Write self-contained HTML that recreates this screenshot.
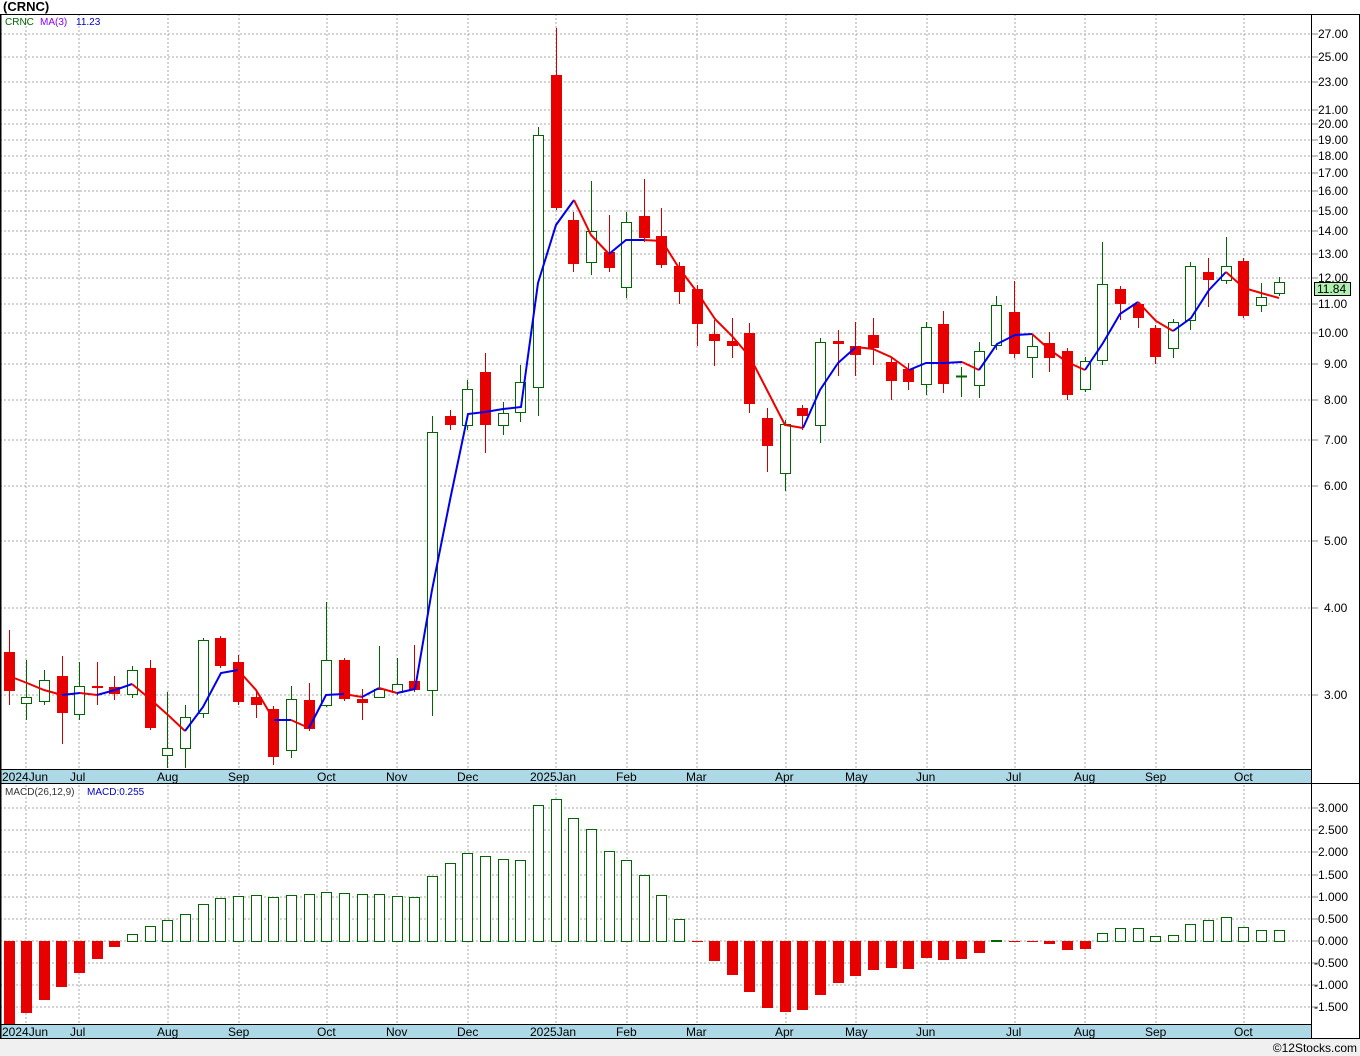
<!DOCTYPE html>
<html><head><meta charset="utf-8"><style>
body{margin:0;background:#fff;width:1360px;height:1056px;overflow:hidden}
svg{display:block;font-family:"Liberation Sans",sans-serif}
.g{stroke:#aaa;stroke-dasharray:2 2;stroke-width:1}
.r line{stroke:#c00;stroke-width:1}.r rect{fill:#e60000}
.w line{stroke:#060;stroke-width:1}.w rect{fill:#fff;stroke:#060;stroke-width:1}
.ax{font-size:12px;fill:#000}
.pl{font-size:12px;fill:#000}
.hp rect{fill:#fff;stroke:#060}
.hn rect{fill:#e60000}
</style></head><body>
<svg width="1360" height="1056" viewBox="0 0 1360 1056">
<text x="3" y="11" font-size="13" font-weight="bold">(CRNC)</text>
<!-- main grid -->
<g class="g">
<line x1="0" x2="1311" y1="34" y2="34"/><line x1="0" x2="1311" y1="57" y2="57"/><line x1="0" x2="1311" y1="82" y2="82"/><line x1="0" x2="1311" y1="110" y2="110"/><line x1="0" x2="1311" y1="124" y2="124"/><line x1="0" x2="1311" y1="140" y2="140"/><line x1="0" x2="1311" y1="156" y2="156"/><line x1="0" x2="1311" y1="173" y2="173"/><line x1="0" x2="1311" y1="191" y2="191"/><line x1="0" x2="1311" y1="211" y2="211"/><line x1="0" x2="1311" y1="231" y2="231"/><line x1="0" x2="1311" y1="254" y2="254"/><line x1="0" x2="1311" y1="278" y2="278"/><line x1="0" x2="1311" y1="304" y2="304"/><line x1="0" x2="1311" y1="333" y2="333"/><line x1="0" x2="1311" y1="364" y2="364"/><line x1="0" x2="1311" y1="400" y2="400"/><line x1="0" x2="1311" y1="440" y2="440"/><line x1="0" x2="1311" y1="486" y2="486"/><line x1="0" x2="1311" y1="541" y2="541"/><line x1="0" x2="1311" y1="608" y2="608"/><line x1="0" x2="1311" y1="695" y2="695"/>
<line x1="26" x2="26" y1="14" y2="770"/><line x1="79" x2="79" y1="14" y2="770"/><line x1="168" x2="168" y1="14" y2="770"/><line x1="239" x2="239" y1="14" y2="770"/><line x1="327" x2="327" y1="14" y2="770"/><line x1="397" x2="397" y1="14" y2="770"/><line x1="468" x2="468" y1="14" y2="770"/><line x1="556" x2="556" y1="14" y2="770"/><line x1="627" x2="627" y1="14" y2="770"/><line x1="697" x2="697" y1="14" y2="770"/><line x1="786" x2="786" y1="14" y2="770"/><line x1="856" x2="856" y1="14" y2="770"/><line x1="927" x2="927" y1="14" y2="770"/><line x1="1015" x2="1015" y1="14" y2="770"/><line x1="1085" x2="1085" y1="14" y2="770"/><line x1="1156" x2="1156" y1="14" y2="770"/><line x1="1244" x2="1244" y1="14" y2="770"/>
<!-- macd grid -->
<line x1="0" x2="1311" y1="808" y2="808"/><line x1="0" x2="1311" y1="830" y2="830"/><line x1="0" x2="1311" y1="852" y2="852"/><line x1="0" x2="1311" y1="875" y2="875"/><line x1="0" x2="1311" y1="897" y2="897"/><line x1="0" x2="1311" y1="919" y2="919"/><line x1="0" x2="1311" y1="941" y2="941"/><line x1="0" x2="1311" y1="963" y2="963"/><line x1="0" x2="1311" y1="985" y2="985"/><line x1="0" x2="1311" y1="1007" y2="1007"/>
<line x1="26" x2="26" y1="785" y2="1025"/><line x1="79" x2="79" y1="785" y2="1025"/><line x1="168" x2="168" y1="785" y2="1025"/><line x1="239" x2="239" y1="785" y2="1025"/><line x1="327" x2="327" y1="785" y2="1025"/><line x1="397" x2="397" y1="785" y2="1025"/><line x1="468" x2="468" y1="785" y2="1025"/><line x1="556" x2="556" y1="785" y2="1025"/><line x1="627" x2="627" y1="785" y2="1025"/><line x1="697" x2="697" y1="785" y2="1025"/><line x1="786" x2="786" y1="785" y2="1025"/><line x1="856" x2="856" y1="785" y2="1025"/><line x1="927" x2="927" y1="785" y2="1025"/><line x1="1015" x2="1015" y1="785" y2="1025"/><line x1="1085" x2="1085" y1="785" y2="1025"/><line x1="1156" x2="1156" y1="785" y2="1025"/><line x1="1244" x2="1244" y1="785" y2="1025"/>
</g>
<!-- candles -->
<g class="r"><line x1="9.5" x2="9.5" y1="630" y2="705"/><rect x="4" y="652" width="11" height="39"/></g>
<g class="w"><line x1="26.5" x2="26.5" y1="660" y2="720"/><rect x="21.5" y="697.5" width="10" height="6"/></g>
<g class="w"><line x1="44.5" x2="44.5" y1="670" y2="705"/><rect x="39.5" y="680.5" width="10" height="21"/></g>
<g class="r"><line x1="62.5" x2="62.5" y1="656" y2="744"/><rect x="57" y="676" width="11" height="37"/></g>
<g class="w"><line x1="79.5" x2="79.5" y1="662" y2="720"/><rect x="74.5" y="686.5" width="10" height="28"/></g>
<g class="r"><line x1="97.5" x2="97.5" y1="662" y2="705"/><rect x="92" y="686" width="11" height="2"/></g>
<g class="r"><line x1="114.5" x2="114.5" y1="676" y2="700"/><rect x="109" y="687" width="11" height="7"/></g>
<g class="w"><line x1="132.5" x2="132.5" y1="666" y2="698"/><rect x="127.5" y="670.5" width="10" height="24"/></g>
<g class="r"><line x1="150.5" x2="150.5" y1="660" y2="730"/><rect x="145" y="668" width="11" height="60"/></g>
<g class="w"><line x1="167.5" x2="167.5" y1="692" y2="768"/><rect x="162.5" y="748.5" width="10" height="7"/></g>
<g class="w"><line x1="185.5" x2="185.5" y1="705" y2="768"/><rect x="180.5" y="717.5" width="10" height="31"/></g>
<g class="w"><line x1="203.5" x2="203.5" y1="638" y2="718"/><rect x="198.5" y="640.5" width="10" height="73"/></g>
<g class="r"><line x1="220.5" x2="220.5" y1="636" y2="668"/><rect x="215" y="638" width="11" height="28"/></g>
<g class="r"><line x1="238.5" x2="238.5" y1="655" y2="705"/><rect x="233" y="662" width="11" height="40"/></g>
<g class="r"><line x1="256.5" x2="256.5" y1="690" y2="718"/><rect x="251" y="697" width="11" height="8"/></g>
<g class="r"><line x1="273.5" x2="273.5" y1="706" y2="765"/><rect x="268" y="709" width="11" height="48"/></g>
<g class="w"><line x1="291.5" x2="291.5" y1="686" y2="758"/><rect x="286.5" y="699.5" width="10" height="51"/></g>
<g class="r"><line x1="309.5" x2="309.5" y1="683" y2="731"/><rect x="304" y="700" width="11" height="29"/></g>
<g class="w"><line x1="326.5" x2="326.5" y1="602" y2="707"/><rect x="321.5" y="660.5" width="10" height="45"/></g>
<g class="r"><line x1="344.5" x2="344.5" y1="658" y2="701"/><rect x="339" y="660" width="11" height="39"/></g>
<g class="r"><line x1="362.5" x2="362.5" y1="689" y2="720"/><rect x="357" y="699" width="11" height="4"/></g>
<g class="w"><line x1="379.5" x2="379.5" y1="646" y2="698"/><rect x="374.5" y="689.5" width="10" height="8"/></g>
<g class="w"><line x1="397.5" x2="397.5" y1="658" y2="695"/><rect x="392.5" y="684.5" width="10" height="8"/></g>
<g class="r"><line x1="414.5" x2="414.5" y1="645" y2="692"/><rect x="409" y="681" width="11" height="9"/></g>
<g class="w"><line x1="432.5" x2="432.5" y1="416" y2="716"/><rect x="427.5" y="432.5" width="10" height="258"/></g>
<g class="r"><line x1="450.5" x2="450.5" y1="410" y2="430"/><rect x="445" y="416" width="11" height="9"/></g>
<g class="w"><line x1="467.5" x2="467.5" y1="380" y2="430"/><rect x="462.5" y="389.5" width="10" height="36"/></g>
<g class="r"><line x1="485.5" x2="485.5" y1="353" y2="453"/><rect x="480" y="372" width="11" height="53"/></g>
<g class="w"><line x1="503.5" x2="503.5" y1="402" y2="435"/><rect x="498.5" y="413.5" width="10" height="12"/></g>
<g class="w"><line x1="520.5" x2="520.5" y1="365" y2="422"/><rect x="515.5" y="382.5" width="10" height="30"/></g>
<g class="w"><line x1="538.5" x2="538.5" y1="127" y2="416"/><rect x="533.5" y="135.5" width="10" height="252"/></g>
<g class="r"><line x1="556.5" x2="556.5" y1="28" y2="210"/><rect x="551" y="75" width="11" height="133"/></g>
<g class="r"><line x1="573.5" x2="573.5" y1="212" y2="272"/><rect x="568" y="220" width="11" height="44"/></g>
<g class="w"><line x1="591.5" x2="591.5" y1="181" y2="275"/><rect x="586.5" y="231.5" width="10" height="31"/></g>
<g class="r"><line x1="609.5" x2="609.5" y1="215" y2="272"/><rect x="604" y="252" width="11" height="16"/></g>
<g class="w"><line x1="626.5" x2="626.5" y1="212" y2="298"/><rect x="621.5" y="222.5" width="10" height="65"/></g>
<g class="r"><line x1="644.5" x2="644.5" y1="179" y2="242"/><rect x="639" y="216" width="11" height="22"/></g>
<g class="r"><line x1="661.5" x2="661.5" y1="208" y2="268"/><rect x="656" y="236" width="11" height="29"/></g>
<g class="r"><line x1="679.5" x2="679.5" y1="262" y2="304"/><rect x="674" y="266" width="11" height="26"/></g>
<g class="r"><line x1="697.5" x2="697.5" y1="285" y2="346"/><rect x="692" y="289" width="11" height="35"/></g>
<g class="r"><line x1="714.5" x2="714.5" y1="320" y2="366"/><rect x="709" y="334" width="11" height="7"/></g>
<g class="r"><line x1="732.5" x2="732.5" y1="318" y2="358"/><rect x="727" y="341" width="11" height="5"/></g>
<g class="r"><line x1="749.5" x2="749.5" y1="323" y2="413"/><rect x="744" y="333" width="11" height="71"/></g>
<g class="r"><line x1="767.5" x2="767.5" y1="408" y2="472"/><rect x="762" y="418" width="11" height="28"/></g>
<g class="w"><line x1="785.5" x2="785.5" y1="420" y2="491"/><rect x="780.5" y="424.5" width="10" height="49"/></g>
<g class="r"><line x1="802.5" x2="802.5" y1="405" y2="430"/><rect x="797" y="408" width="11" height="8"/></g>
<g class="w"><line x1="820.5" x2="820.5" y1="338" y2="443"/><rect x="815.5" y="342.5" width="10" height="83"/></g>
<g class="r"><line x1="838.5" x2="838.5" y1="330" y2="376"/><rect x="833" y="341" width="11" height="3"/></g>
<g class="r"><line x1="855.5" x2="855.5" y1="322" y2="376"/><rect x="850" y="346" width="11" height="9"/></g>
<g class="r"><line x1="873.5" x2="873.5" y1="318" y2="365"/><rect x="868" y="335" width="11" height="13"/></g>
<g class="r"><line x1="891.5" x2="891.5" y1="358" y2="400"/><rect x="886" y="362" width="11" height="19"/></g>
<g class="r"><line x1="908.5" x2="908.5" y1="363" y2="390"/><rect x="903" y="369" width="11" height="13"/></g>
<g class="w"><line x1="926.5" x2="926.5" y1="322" y2="395"/><rect x="921.5" y="327.5" width="10" height="57"/></g>
<g class="r"><line x1="943.5" x2="943.5" y1="311" y2="393"/><rect x="938" y="324" width="11" height="60"/></g>
<g class="w"><line x1="961.5" x2="961.5" y1="367" y2="397"/><rect x="956.5" y="376" width="10" height="1"/></g>
<g class="w"><line x1="979.5" x2="979.5" y1="342" y2="398"/><rect x="974.5" y="351.5" width="10" height="34"/></g>
<g class="w"><line x1="996.5" x2="996.5" y1="296" y2="350"/><rect x="991.5" y="305.5" width="10" height="40"/></g>
<g class="r"><line x1="1014.5" x2="1014.5" y1="281" y2="358"/><rect x="1009" y="312" width="11" height="42"/></g>
<g class="w"><line x1="1032.5" x2="1032.5" y1="335" y2="378"/><rect x="1027.5" y="346.5" width="10" height="11"/></g>
<g class="r"><line x1="1049.5" x2="1049.5" y1="332" y2="372"/><rect x="1044" y="343" width="11" height="15"/></g>
<g class="r"><line x1="1067.5" x2="1067.5" y1="348" y2="400"/><rect x="1062" y="351" width="11" height="44"/></g>
<g class="w"><line x1="1085.5" x2="1085.5" y1="357" y2="392"/><rect x="1080.5" y="361.5" width="10" height="28"/></g>
<g class="w"><line x1="1102.5" x2="1102.5" y1="242" y2="365"/><rect x="1097.5" y="284.5" width="10" height="76"/></g>
<g class="r"><line x1="1120.5" x2="1120.5" y1="286" y2="320"/><rect x="1115" y="289" width="11" height="15"/></g>
<g class="r"><line x1="1138.5" x2="1138.5" y1="302" y2="328"/><rect x="1133" y="304" width="11" height="14"/></g>
<g class="r"><line x1="1155.5" x2="1155.5" y1="325" y2="364"/><rect x="1150" y="328" width="11" height="29"/></g>
<g class="w"><line x1="1173.5" x2="1173.5" y1="319" y2="358"/><rect x="1168.5" y="322.5" width="10" height="26"/></g>
<g class="w"><line x1="1190.5" x2="1190.5" y1="262" y2="330"/><rect x="1185.5" y="266.5" width="10" height="54"/></g>
<g class="r"><line x1="1208.5" x2="1208.5" y1="258" y2="307"/><rect x="1203" y="272" width="11" height="8"/></g>
<g class="w"><line x1="1226.5" x2="1226.5" y1="237" y2="284"/><rect x="1221.5" y="266.5" width="10" height="14"/></g>
<g class="r"><line x1="1243.5" x2="1243.5" y1="258" y2="318"/><rect x="1238" y="261" width="11" height="55"/></g>
<g class="w"><line x1="1261.5" x2="1261.5" y1="283" y2="312"/><rect x="1256.5" y="297.5" width="10" height="8"/></g>
<g class="w"><line x1="1279.5" x2="1279.5" y1="277" y2="296"/><rect x="1274.5" y="282.5" width="10" height="11"/></g>
<!-- MA -->
<g fill="none" stroke-width="2">
<polyline stroke="#e00" points="9,676 27,683 44,690 62,695"/>
<polyline stroke="#00e" points="62,695 80,693"/>
<polyline stroke="#e00" points="80,693 97,695"/>
<polyline stroke="#00e" points="97,695 115,690 132,684"/>
<polyline stroke="#e00" points="132,684 150,699 168,715 185,731"/>
<polyline stroke="#00e" points="185,731 203,707 221,673 238,670"/>
<polyline stroke="#e00" points="238,670 256,690 274,720"/>
<polyline stroke="#00e" points="274,720 291,720"/>
<polyline stroke="#e00" points="291,720 309,728"/>
<polyline stroke="#00e" points="309,728 326,695 344,694"/>
<polyline stroke="#e00" points="344,694 362,697"/>
<polyline stroke="#00e" points="362,697 379,688"/>
<polyline stroke="#e00" points="379,688 397,693"/>
<polyline stroke="#00e" points="397,693 415,689 432,590 450,500 468,414 485,412 503,409 521,407 538,283 556,225 574,200"/>
<polyline stroke="#e00" points="574,200 591,235 609,254"/>
<polyline stroke="#00e" points="609,254 626,240 644,240"/>
<polyline stroke="#e00" points="644,240 662,241 679,268 697,292 715,319 732,336 750,357 768,392 785,425 803,428"/>
<polyline stroke="#00e" points="803,428 820,390 838,363 856,347"/>
<polyline stroke="#e00" points="856,347 873,349 891,357 909,370"/>
<polyline stroke="#00e" points="909,370 926,363 944,363 962,362"/>
<polyline stroke="#e00" points="962,362 979,370"/>
<polyline stroke="#00e" points="979,370 997,344 1015,335 1032,334"/>
<polyline stroke="#e00" points="1032,334 1050,350 1067,362 1085,370"/>
<polyline stroke="#00e" points="1085,370 1103,343 1120,314 1138,302"/>
<polyline stroke="#e00" points="1138,302 1156,321 1173,331"/>
<polyline stroke="#00e" points="1173,331 1191,318 1209,290 1226,272"/>
<polyline stroke="#e00" points="1226,272 1244,288 1261,293 1279,298"/>
</g>
<!-- MACD histogram -->
<g class="hn"><rect x="4" y="941" width="11" height="84"/><rect x="21" y="941" width="11" height="72"/><rect x="39" y="941" width="11" height="59"/><rect x="56" y="941" width="11" height="46"/><rect x="74" y="941" width="11" height="32"/><rect x="92" y="941" width="11" height="18"/><rect x="109" y="941" width="11" height="6"/>
<rect x="692" y="941" width="11" height="1"/><rect x="709" y="941" width="11" height="20"/><rect x="727" y="941" width="11" height="34"/><rect x="744" y="941" width="11" height="51"/><rect x="762" y="941" width="11" height="67"/><rect x="780" y="941" width="11" height="71"/><rect x="797" y="941" width="11" height="69"/><rect x="815" y="941" width="11" height="54"/><rect x="833" y="941" width="11" height="42"/><rect x="850" y="941" width="11" height="35"/><rect x="868" y="941" width="11" height="29"/><rect x="886" y="941" width="11" height="27"/><rect x="903" y="941" width="11" height="28"/><rect x="921" y="941" width="11" height="17"/><rect x="938" y="941" width="11" height="19"/><rect x="956" y="941" width="11" height="18"/><rect x="974" y="941" width="11" height="12"/><rect x="1009" y="941" width="11" height="1"/><rect x="1027" y="941" width="11" height="1"/><rect x="1044" y="941" width="11" height="3"/><rect x="1062" y="941" width="11" height="9"/><rect x="1080" y="941" width="11" height="8"/></g>
<g class="hp">
<rect x="127.5" y="934.5" width="10" height="7"/><rect x="145.5" y="926.5" width="10" height="15"/><rect x="162.5" y="920.5" width="10" height="21"/><rect x="180.5" y="914.5" width="10" height="27"/><rect x="198.5" y="904.5" width="10" height="37"/><rect x="215.5" y="898.5" width="10" height="43"/><rect x="233.5" y="896.5" width="10" height="45"/><rect x="251.5" y="895.5" width="10" height="46"/><rect x="268.5" y="897.5" width="10" height="44"/><rect x="286.5" y="895.5" width="10" height="46"/><rect x="304.5" y="894.5" width="10" height="47"/><rect x="321.5" y="892.5" width="10" height="49"/><rect x="339.5" y="893.5" width="10" height="48"/><rect x="357.5" y="894.5" width="10" height="47"/><rect x="374.5" y="894.5" width="10" height="47"/><rect x="392.5" y="896.5" width="10" height="45"/><rect x="409.5" y="897.5" width="10" height="44"/><rect x="427.5" y="876.5" width="10" height="65"/><rect x="445.5" y="863.5" width="10" height="78"/><rect x="462.5" y="853.5" width="10" height="88"/><rect x="480.5" y="856.5" width="10" height="85"/><rect x="498.5" y="859.5" width="10" height="82"/><rect x="515.5" y="860.5" width="10" height="81"/><rect x="533.5" y="805.5" width="10" height="136"/><rect x="551.5" y="799.5" width="10" height="142"/><rect x="568.5" y="818.5" width="10" height="123"/><rect x="586.5" y="829.5" width="10" height="112"/><rect x="604.5" y="851.5" width="10" height="90"/><rect x="621.5" y="860.5" width="10" height="81"/><rect x="639.5" y="875.5" width="10" height="66"/><rect x="656.5" y="895.5" width="10" height="46"/><rect x="674.5" y="919.5" width="10" height="22"/><rect x="991.5" y="940.5" width="10" height="1"/><rect x="1097.5" y="933.5" width="10" height="8"/><rect x="1115.5" y="928.5" width="10" height="13"/><rect x="1133.5" y="928.5" width="10" height="13"/><rect x="1150.5" y="936.5" width="10" height="5"/><rect x="1168.5" y="935.5" width="10" height="6"/><rect x="1185.5" y="924.5" width="10" height="17"/><rect x="1203.5" y="920.5" width="10" height="21"/><rect x="1221.5" y="917.5" width="10" height="24"/><rect x="1238.5" y="927.5" width="10" height="14"/><rect x="1256.5" y="930.5" width="10" height="11"/><rect x="1274.5" y="930.5" width="10" height="11"/></g>
<!-- borders and axis bands -->
<rect x="0" y="770" width="1311" height="13" fill="#add8e6"/>
<rect x="0" y="1025" width="1311" height="13" fill="#add8e6"/>
<rect x="0" y="1039" width="1360" height="17" fill="#f0f0f0"/>
<g stroke="#000" stroke-width="1" fill="none">
<line x1="0" x2="1360" y1="14.5" y2="14.5"/>
<line x1="1311.5" x2="1311.5" y1="14" y2="1039"/>
<line x1="1359.5" x2="1359.5" y1="14" y2="1039"/>
<line x1="0" x2="1311" y1="769.5" y2="769.5"/>
<line x1="0" x2="1360" y1="783.5" y2="783.5"/>
<line x1="0" x2="1311" y1="1024.5" y2="1024.5"/>
<line x1="0" x2="1360" y1="1038.5" y2="1038.5"/>
<line x1="0.5" x2="0.5" y1="14" y2="1039" stroke-width="2"/>
</g>
<g stroke="#888">
<line x1="1312" x2="1318" y1="34" y2="34"/><line x1="1312" x2="1318" y1="57" y2="57"/><line x1="1312" x2="1318" y1="82" y2="82"/><line x1="1312" x2="1318" y1="110" y2="110"/><line x1="1312" x2="1318" y1="124" y2="124"/><line x1="1312" x2="1318" y1="140" y2="140"/><line x1="1312" x2="1318" y1="156" y2="156"/><line x1="1312" x2="1318" y1="173" y2="173"/><line x1="1312" x2="1318" y1="191" y2="191"/><line x1="1312" x2="1318" y1="211" y2="211"/><line x1="1312" x2="1318" y1="231" y2="231"/><line x1="1312" x2="1318" y1="254" y2="254"/><line x1="1312" x2="1318" y1="278" y2="278"/><line x1="1312" x2="1318" y1="304" y2="304"/><line x1="1312" x2="1318" y1="333" y2="333"/><line x1="1312" x2="1318" y1="364" y2="364"/><line x1="1312" x2="1318" y1="400" y2="400"/><line x1="1312" x2="1318" y1="440" y2="440"/><line x1="1312" x2="1318" y1="486" y2="486"/><line x1="1312" x2="1318" y1="541" y2="541"/><line x1="1312" x2="1318" y1="608" y2="608"/><line x1="1312" x2="1318" y1="695" y2="695"/>
<line x1="1312" x2="1318" y1="808" y2="808"/><line x1="1312" x2="1318" y1="830" y2="830"/><line x1="1312" x2="1318" y1="852" y2="852"/><line x1="1312" x2="1318" y1="875" y2="875"/><line x1="1312" x2="1318" y1="897" y2="897"/><line x1="1312" x2="1318" y1="919" y2="919"/><line x1="1312" x2="1318" y1="941" y2="941"/><line x1="1312" x2="1318" y1="963" y2="963"/><line x1="1312" x2="1318" y1="985" y2="985"/><line x1="1312" x2="1318" y1="1007" y2="1007"/>
</g>
<g class="pl">
<text x="1318" y="38">27.00</text><text x="1318" y="61">25.00</text><text x="1318" y="86">23.00</text><text x="1318" y="114">21.00</text><text x="1318" y="128">20.00</text><text x="1318" y="144">19.00</text><text x="1318" y="160">18.00</text><text x="1318" y="177">17.00</text><text x="1318" y="195">16.00</text><text x="1318" y="215">15.00</text><text x="1318" y="235">14.00</text><text x="1318" y="258">13.00</text><text x="1318" y="282">12.00</text><text x="1318" y="308">11.00</text><text x="1318" y="337">10.00</text><text x="1324" y="368">9.00</text><text x="1324" y="404">8.00</text><text x="1324" y="444">7.00</text><text x="1324" y="490">6.00</text><text x="1324" y="545">5.00</text><text x="1324" y="612">4.00</text><text x="1324" y="699">3.00</text>
<text x="1318" y="812">3.000</text><text x="1318" y="834">2.500</text><text x="1318" y="856">2.000</text><text x="1318" y="879">1.500</text><text x="1318" y="901">1.000</text><text x="1318" y="923">0.500</text><text x="1318" y="945">0.000</text><text x="1314" y="967">-0.500</text><text x="1314" y="989">-1.000</text><text x="1314" y="1011">-1.500</text>
</g>
<rect x="1314.5" y="282.5" width="36" height="13" fill="#b0f0b0" stroke="#000"/>
<text x="1317" y="293" class="pl">11.84</text>
<g class="ax">
<text x="2" y="781">2024Jun</text><text x="70" y="781">Jul</text><text x="157" y="781">Aug</text><text x="228" y="781">Sep</text><text x="317" y="781">Oct</text><text x="386" y="781">Nov</text><text x="457" y="781">Dec</text><text x="530" y="781">2025Jan</text><text x="616" y="781">Feb</text><text x="686" y="781">Mar</text><text x="775" y="781">Apr</text><text x="845" y="781">May</text><text x="916" y="781">Jun</text><text x="1006" y="781">Jul</text><text x="1074" y="781">Aug</text><text x="1145" y="781">Sep</text><text x="1234" y="781">Oct</text>
<text x="2" y="1036">2024Jun</text><text x="70" y="1036">Jul</text><text x="157" y="1036">Aug</text><text x="228" y="1036">Sep</text><text x="317" y="1036">Oct</text><text x="386" y="1036">Nov</text><text x="457" y="1036">Dec</text><text x="530" y="1036">2025Jan</text><text x="616" y="1036">Feb</text><text x="686" y="1036">Mar</text><text x="775" y="1036">Apr</text><text x="845" y="1036">May</text><text x="916" y="1036">Jun</text><text x="1006" y="1036">Jul</text><text x="1074" y="1036">Aug</text><text x="1145" y="1036">Sep</text><text x="1234" y="1036">Oct</text>
</g>
<text x="5" y="25" font-size="10" fill="#060">CRNC</text>
<text x="40" y="25" font-size="10" fill="#80f">MA(3)</text>
<text x="76" y="25" font-size="10" fill="#00c">11.23</text>
<text x="5" y="795" font-size="10" fill="#333">MACD(26,12,9)</text>
<text x="87" y="795" font-size="10" fill="#00c">MACD:0.255</text>
<text x="1357" y="1052" font-size="12" text-anchor="end" fill="#000">©12Stocks.com</text>
</svg>
</body></html>
